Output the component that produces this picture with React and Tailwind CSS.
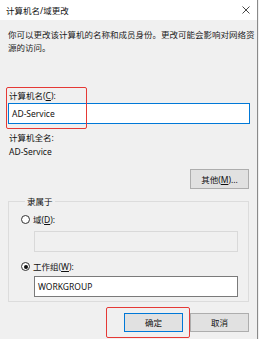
import React from "react";

function Radio({ checked }) {
  return (
    <span className="relative flex h-[9px] w-[9px] shrink-0 items-center justify-center rounded-full border border-[#333] bg-white">
      {checked && <span className="h-[4px] w-[4px] rounded-full bg-[#111]" />}
    </span>
  );
}

function Btn({ children, focused, className = "" }) {
  return (
    <div
      className={
        "flex h-[19px] w-[59px] items-center justify-center border bg-[#e1e1e1] " +
        (focused ? "border-[#0078d7] " : "border-[#adadad] ") +
        className
      }
    >
      {children}
    </div>
  );
}

export default function App() {
  return (
    <div className="relative h-[339px] w-[259px] overflow-hidden bg-[#f0f0f0] font-['Noto_Sans','Noto_Sans_CJK_SC',sans-serif] text-[8.5px] leading-[13px] text-[#111]">
      <div className="flex h-full w-[258px] flex-col border-r border-[#8a8a8a]">
        {/* title bar */}
        <div className="flex h-[20px] shrink-0 items-center justify-between bg-white pl-[6px] pr-[7px]">
          <span className="text-[8.5px]">计算机名/域更改</span>
          <svg width="8" height="8" viewBox="0 0 8 8" className="mt-[-1px]">
            <path d="M0.5 0.5 L7.5 7.5 M7.5 0.5 L0.5 7.5" stroke="#333" strokeWidth="0.9" fill="none" />
          </svg>
        </div>

        <div className="flex flex-col pl-[8px]">
          <p className="mt-[8px] w-[249px] text-[#222]">
            你可以更改该计算机的名称和成员身份。更改可能会影响对网络资源的访问。
          </p>

          <div className="mt-[35px] pl-[1px]">
            计算机名(<span className="underline">C</span>):
          </div>
          <div className="mt-[1px] flex h-[21px] w-[242px] items-center border border-[#0078d7] bg-white pl-[3px]">
            AD-Service
          </div>

          <div className="mt-[7px] pl-[1px]">计算机全名:</div>
          <div className="mt-[1px] pl-[1px]">AD-Service</div>

          <div className="mt-[11px] flex w-[241px] justify-end">
            <Btn className="h-[20px]">
              其他(<span className="underline">M</span>)...
            </Btn>
          </div>

          <fieldset className="mt-[6px] h-[107px] w-[241px] border border-[#dcdcdc] pl-[12px]">
            <legend className="ml-[4px] px-[2px]">隶属于</legend>
            <div className="mt-[5px] flex items-center gap-[3px]">
              <Radio />
              <span>
                域(<span className="underline">D</span>):
              </span>
            </div>
            <div className="ml-[13px] mt-[5px] h-[21px] w-[204px] border border-[#d9d9d9] bg-[#f0f0f0]" />
            <div className="mt-[8px] flex items-center gap-[3px]">
              <Radio checked />
              <span>
                工作组(<span className="underline">W</span>):
              </span>
            </div>
            <div className="ml-[13px] mt-[3px] flex h-[21px] w-[204px] items-center border border-[#7a7a7a] bg-white pl-[3px]">
              WORKGROUP
            </div>
          </fieldset>

          <div className="mt-[11px] flex w-[241px] justify-end gap-[7px]">
            <Btn focused>确定</Btn>
            <Btn>取消</Btn>
          </div>
        </div>
      </div>

      {/* red annotation boxes */}
      <div className="pointer-events-none absolute left-[6px] top-[87px] h-[42px] w-[81px] rounded-[2px] border border-[#e53935]" />
      <div className="pointer-events-none absolute left-[106px] top-[307px] h-[31px] w-[84px] rounded-[2px] border border-[#e53935]" />
    </div>
  );
}
